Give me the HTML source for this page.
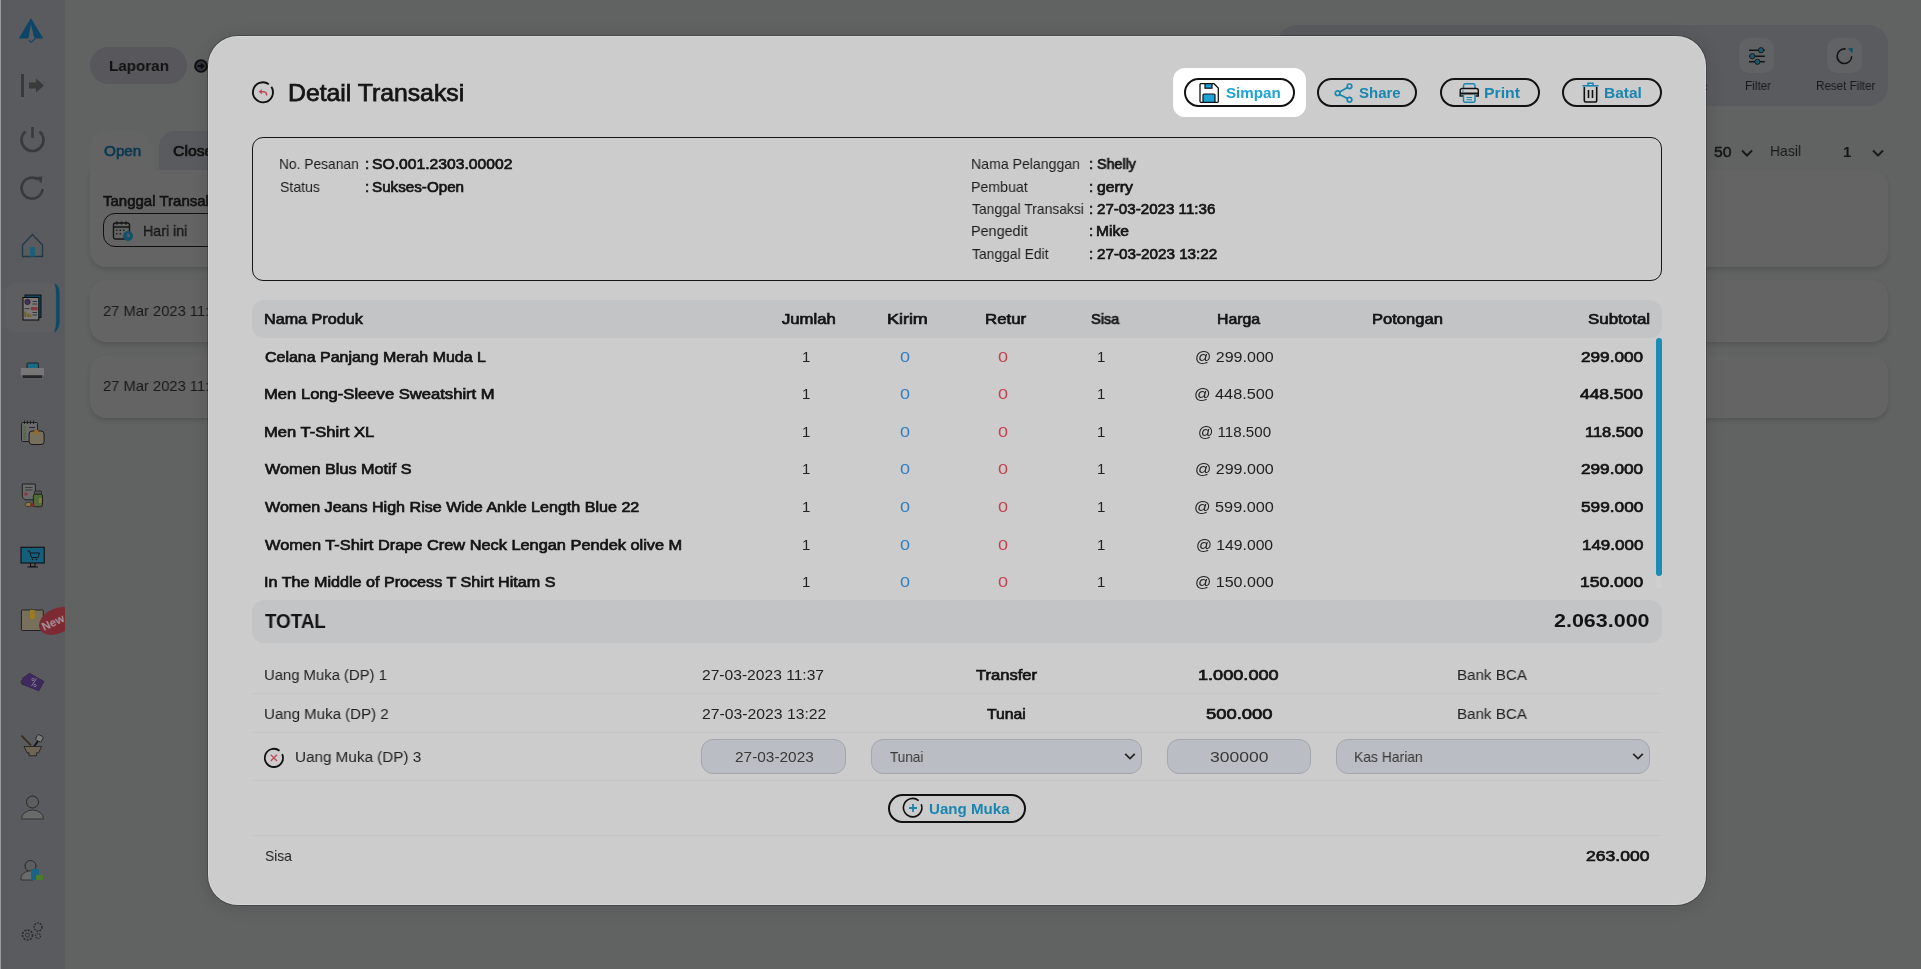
<!DOCTYPE html>
<html><head><meta charset="utf-8">
<title>Detail Transaksi</title>
<style>
*{box-sizing:border-box;margin:0;padding:0}
html,body{width:1921px;height:969px;overflow:hidden}
body{background:#616262;font-family:"Liberation Sans",sans-serif;color:#141414;position:relative}
.a{position:absolute}
.t{position:absolute;white-space:nowrap;line-height:1;transform-origin:0 0;will-change:transform}
svg{position:absolute;overflow:visible}
.sep{position:absolute;left:252px;width:1410px;height:1px;background:#c3c5c7}
.btn{position:absolute;top:78px;height:29px;border:2px solid #121212;border-radius:15px}
.inp{position:absolute;top:739px;height:35px;background:#babdc3;border:1px solid #a3a6ab;border-radius:12px}
</style></head>
<body>
<!-- sidebar -->
<div class="a" style="left:0;top:0;width:65px;height:969px;background:#5a5b5f"></div>
<div class="a" style="left:0;top:0;width:1px;height:969px;background:#9a9b9d"></div>

<!-- background page -->
<div class="a" style="left:90px;top:47px;width:97px;height:37px;border-radius:19px;background:#58585c"></div>
<svg style="left:194px;top:59px" width="14" height="14" viewBox="0 0 14 14"><circle cx="7" cy="7" r="5.9" fill="#30363b" stroke="#0e0e0e" stroke-width="1.9"/><path d="M3.5 7H9.3M6.9 4.6L9.4 7L6.9 9.4" stroke="#0e0e0e" stroke-width="1.9" fill="none"/></svg>

<div class="a" style="left:1277px;top:25px;width:611px;height:80.5px;border-radius:20px;background:#5a5b5e"></div>
<div class="a" style="left:1739px;top:38px;width:35px;height:35px;border-radius:10px;background:#616264"></div>
<div class="a" style="left:1827px;top:38px;width:35px;height:35px;border-radius:10px;background:#616264"></div>
<svg style="left:1745px;top:45px" width="24" height="24" viewBox="0 0 24 24"><g stroke="#141414" stroke-width="1.5" fill="none"><path d="M4 5.2H19.8M4 11.2H19.8M4 16.8H19.8"/></g><g stroke="#141414" stroke-width="0.9" fill="#1b5a72"><circle cx="16" cy="5.2" r="2.6"/><circle cx="7.3" cy="11.2" r="2.6"/><circle cx="12.4" cy="16.8" r="2.6"/></g></svg>
<svg style="left:1833px;top:45px" width="24" height="24" viewBox="0 0 24 24"><path d="M18.7 11.2A7.3 7.3 0 1 1 12.67 4.0" stroke="#141414" stroke-width="1.6" fill="none"/><path d="M14.8 3.6L19.9 3.1L19.5 8.2Z" fill="#134d62"/></svg>
<div class="a" style="left:1706px;top:85px;width:1.3px;height:1.3px;background:#141414"></div><div class="a" style="left:1706px;top:89px;width:1.3px;height:1.3px;background:#141414"></div>

<!-- tabs card -->
<div class="a" style="left:90px;top:131px;width:63px;height:45px;border-radius:16px 16px 0 0;background:#646464"></div>
<div class="a" style="left:159px;top:131px;width:200px;height:40px;border-radius:16px 16px 0 0;background:#5a5b5e"></div>
<div class="a" style="left:90px;top:170px;width:1798px;height:97px;border-radius:0 16px 16px 16px;background:#646464;box-shadow:0 3px 4px rgba(0,0,0,0.12)"></div>
<div class="a" style="left:103px;top:213px;width:200px;height:34px;border:1.5px solid #111;border-radius:12px"></div>
<svg style="left:112px;top:220px" width="22" height="22" viewBox="0 0 22 22"><rect x="1.5" y="3" width="16" height="16" rx="2" stroke="#151515" stroke-width="1.4" fill="none"/><path d="M1.5 7H17.5M5 1.5V4.5M9.5 1.5V4.5M14 1.5V4.5" stroke="#151515" stroke-width="1.4"/><g fill="#222"><rect x="4" y="9.5" width="1.5" height="1.5"/><rect x="7.5" y="9.5" width="1.5" height="1.5"/><rect x="11" y="9.5" width="1.5" height="1.5"/><rect x="4" y="13" width="1.5" height="1.5"/><rect x="7.5" y="13" width="1.5" height="1.5"/></g><circle cx="16" cy="16" r="5" fill="#14506a"/><path d="M16 13.3V16.2H18" stroke="#646464" stroke-width="1.2" fill="none"/></svg>
<div class="a" style="left:90px;top:280px;width:1798px;height:62px;border-radius:16px;background:#646464;box-shadow:0 3px 4px rgba(0,0,0,0.12)"></div>
<div class="a" style="left:90px;top:355px;width:1798px;height:63px;border-radius:16px;background:#646464;box-shadow:0 3px 4px rgba(0,0,0,0.12)"></div>
<svg style="left:1740px;top:148px" width="14" height="10" viewBox="0 0 14 10"><path d="M2 2.5L7 7.5L12 2.5" stroke="#1a1a1a" stroke-width="2" fill="none"/></svg>
<svg style="left:1871px;top:148px" width="14" height="10" viewBox="0 0 14 10"><path d="M2 2.5L7 7.5L12 2.5" stroke="#1a1a1a" stroke-width="2" fill="none"/></svg>

<div class="t" style="left:108.92px;top:57.88px;font-size:15.5px;color:#121212;font-weight:700;transform:scaleX(0.9803)">Laporan</div>
<div class="t" style="left:103.60px;top:143.30px;font-size:15px;color:#0b3a52;-webkit-text-stroke:0.7px #0b3a52;transform:scaleX(1.0178)">Open</div>
<div class="t" style="left:172.70px;top:143.30px;font-size:15px;color:#121212;-webkit-text-stroke:0.7px #121212;transform:scaleX(1.0524)">Close</div>
<div class="t" style="left:103.10px;top:193.10px;font-size:15px;color:#121212;-webkit-text-stroke:0.6px #121212">Tanggal Transaksi</div>
<div class="t" style="left:143.05px;top:222.80px;font-size:15px;color:#161616;-webkit-text-stroke:0.3px #161616;transform:scaleX(0.9483)">Hari ini</div>
<div class="t" style="left:102.90px;top:303.38px;font-size:15.5px;color:#1a1a1a;transform:scaleX(0.9505)">27 Mar 2023 11:36</div>
<div class="t" style="left:102.90px;top:378.38px;font-size:15.5px;color:#1a1a1a;transform:scaleX(0.9505)">27 Mar 2023 11:37</div>
<div class="t" style="left:1713.70px;top:143.90px;font-size:15px;color:#161616;-webkit-text-stroke:0.5px #161616;transform:scaleX(1.0525)">50</div>
<div class="t" style="left:1770.37px;top:143.30px;font-size:15px;color:#1a1a1a;transform:scaleX(0.9279)">Hasil</div>
<div class="t" style="left:1843.10px;top:143.90px;font-size:15px;color:#161616;font-weight:700">1</div>
<div class="t" style="left:1744.85px;top:80.44px;font-size:12px;color:#1a1a1a;transform:scaleX(0.9749)">Filter</div>
<div class="t" style="left:1815.80px;top:80.44px;font-size:12px;color:#1a1a1a;transform:scaleX(0.9682)">Reset Filter</div>

<!-- sidebar icons -->
<svg style="left:0;top:0;overflow:hidden" width="65" height="969" viewBox="0 0 65 969">
 <!-- logo -->
 <path d="M30.9 17.9L43.2 38.6H34.3L31 24.2L28.4 38.6H18.8Z" fill="#0c4566"/>
 <path d="M28.8 40.2L31 42.3L35.3 38.6" stroke="#0c4566" stroke-width="1.1" fill="none"/>
 <!-- enter -->
 <rect x="21" y="74" width="3" height="23" fill="#3a3a3a"/>
 <path d="M29 82.5H36V78.5L44 85.5L36 92.5V88.5H29Z" fill="#3a3a3a"/>
 <!-- power -->
 <path d="M25.5 131.5A11 11 0 1 0 39.5 131.5" stroke="#3a3a3a" stroke-width="2.6" fill="none"/>
 <path d="M32.5 127V138" stroke="#3a3a3a" stroke-width="2.6"/>
 <!-- refresh -->
 <path d="M42.5 189A10.5 10.5 0 1 1 38 179.5" stroke="#3a3a3a" stroke-width="2.6" fill="none"/>
 <path d="M35.5 177L42.5 176.5L41.5 183.5Z" fill="#3a3a3a"/>
 <!-- home -->
 <path d="M22.5 256.5V245L32.5 234.5L42.5 245V256.5Z" stroke="#223846" stroke-width="1.3" fill="none"/>
 <rect x="30" y="247" width="5" height="9.5" fill="#1d5f77"/>
 <!-- report (active) -->
 <path d="M16 283H55V332.5H16A10 10 0 0 1 6 322.5V293A10 10 0 0 1 16 283Z" fill="#5e5e60"/>
 <path d="M54 283Q59.6 285 59.6 294V321Q59.6 330 54 332.5Q56.2 328 56.2 321V294Q56.2 287 54 283Z" fill="#0d4a66"/>
 <rect x="25" y="295" width="16" height="22.5" fill="#0d4a66" stroke="#0a0a0a" stroke-width="0.9"/>
 <rect x="23" y="297.5" width="15.8" height="22.5" fill="#7a7a7a" stroke="#0a0a0a" stroke-width="1"/>
 <circle cx="27.5" cy="302" r="2.7" fill="#4a2b5c" stroke="#1a1a1a" stroke-width="0.6"/>
 <path d="M32.5 301.5H37M32.5 304H37M32.5 312.5H37M32.5 315H37M24.5 308.7H29.5" stroke="#333" stroke-width="1"/>
 <rect x="30.7" y="307" width="7" height="3.3" rx="1" fill="#8c3440"/>
 <path d="M24.3 317V311.5H26.3V317M27.2 317V313.5H29.2V317M29.8 317V314.8H31.3V317" fill="#6e5f28"/>
 <!-- shipping/printer -->
 <rect x="27" y="363" width="11.4" height="5.5" rx="1" fill="#1b6a86" stroke="#111" stroke-width="0.8"/>
 <rect x="20.8" y="368" width="23.2" height="7.3" fill="#777"/>
 <rect x="22.9" y="375.3" width="19.1" height="2.7" fill="#262626"/>
 <!-- clipboard -->
 <rect x="21.5" y="422.5" width="16" height="19" rx="1" fill="#6a6a6a" stroke="#1a1a1a" stroke-width="0.9"/>
 <path d="M24.5 420.5V424M27.5 420.5V424M30.5 420.5V424M33.5 420.5V424" stroke="#1a1a1a" stroke-width="0.9"/>
 <path d="M24.8 426V440" stroke="#4f6b3c" stroke-width="2.4" stroke-dasharray="2.2 1"/>
 <path d="M29 427.5H35" stroke="#2a2a2a" stroke-width="1"/>
 <rect x="29.1" y="431" width="15" height="13.5" rx="3" fill="#76705c" stroke="#1a1a1a" stroke-width="1"/>
 <rect x="34.3" y="430" width="4" height="4.2" rx="1" fill="#9c6a1a"/>
 <!-- document/medicine -->
 <path d="M22.3 484H35.4V499.8H25L22.3 497Z" fill="#6a6a6a" stroke="#1a1a1a" stroke-width="0.9"/>
 <path d="M25 487.5H32.5M25 490H32.5" stroke="#3a3a3a" stroke-width="1.1"/>
 <circle cx="26" cy="494" r="1.7" fill="#8c3440"/>
 <rect x="33.3" y="494" width="9.2" height="12.8" rx="2.2" fill="#4f6b3a" stroke="#1a1a1a" stroke-width="0.9"/>
 <rect x="34.3" y="491" width="7.2" height="3" rx="1" fill="#555" stroke="#1a1a1a" stroke-width="0.7"/>
 <rect x="39" y="498" width="2.5" height="5" fill="#8a7a3a"/>
 <ellipse cx="28.5" cy="504.5" rx="3.3" ry="2.2" fill="#8a7a3a" stroke="#1a1a1a" stroke-width="0.6"/>
 <ellipse cx="32.5" cy="505" rx="2.3" ry="1.9" fill="#7a2a30"/>
 <!-- monitor -->
 <rect x="21" y="547.3" width="23.2" height="15.7" fill="#155f7c" stroke="#111" stroke-width="1.1"/>
 <path d="M30.5 563V566.5H35V563M27.5 567H38" stroke="#111" stroke-width="1.1" fill="none"/>
 <path d="M27.5 551H29.5L31.5 557.5H38L39.5 553H30.5" stroke="#111" stroke-width="0.9" fill="none"/>
 <circle cx="32.5" cy="559.5" r="0.8" fill="#111"/><circle cx="36.5" cy="559.5" r="0.8" fill="#111"/>
 <!-- box + new -->
 <rect x="21.4" y="610" width="21.9" height="20.5" rx="1" fill="#77705c" stroke="#222" stroke-width="1"/>
 <rect x="30" y="610" width="4.8" height="9" fill="#9c7a22"/>
 <ellipse cx="57" cy="621" rx="19" ry="12.5" transform="rotate(-25 57 621)" fill="#7e2a34"/>
 <text x="44" y="631" font-family="Liberation Sans" font-weight="700" font-size="11.5" fill="#a38f93" transform="rotate(-25 44 631)">New</text>
 <!-- tag -->
 <path d="M22.5 678.2L29.5 673.2L44 681.5L38.8 690.8L22.8 684.5Z" fill="#3f2a60" stroke="#2a1d40" stroke-width="0.6"/>
 <path d="M22 680Q19.5 683 23 685" stroke="#222" stroke-width="0.9" fill="none"/>
 <path d="M36.5 678.5L31.5 686" stroke="#8a8294" stroke-width="0.9"/>
 <circle cx="33" cy="679.5" r="1.2" stroke="#8a8294" stroke-width="0.8" fill="none"/>
 <circle cx="35" cy="685.5" r="1.2" stroke="#8a8294" stroke-width="0.8" fill="none"/>
 <!-- mortar -->
 <path d="M21.5 735.6L31 745.4" stroke="#3a2e22" stroke-width="2"/>
 <path d="M34.2 746.2L38.5 740.5" stroke="#111" stroke-width="1.8"/>
 <rect x="36.3" y="735.3" width="6.2" height="6" rx="1" fill="#7c7c7c" stroke="#222" stroke-width="0.8" transform="rotate(25 39.4 738.3)"/>
 <path d="M24 746.5H41.6L38.6 752.8H36.6V755.8H29V752.8H27Z" fill="#6e6454" stroke="#222" stroke-width="0.9"/>
 <!-- user -->
 <circle cx="32.5" cy="802" r="6" stroke="#222" stroke-width="0.9" fill="#5e5e60"/>
 <path d="M21.5 819A11 9 0 0 1 43.5 819Z" fill="#6a6a6a" stroke="#222" stroke-width="0.7"/>
 <!-- user blue -->
 <circle cx="30.5" cy="866" r="5.5" stroke="#222" stroke-width="0.9" fill="#5e5e60"/>
 <path d="M21 880A10 8 0 0 1 33 871V880Z" fill="#6a6a6a" stroke="#222" stroke-width="0.7"/>
 <rect x="31" y="869" width="8" height="11" fill="#1a6286"/>
 <rect x="36" y="875" width="7" height="5" rx="1" fill="#4f7a2a"/>
 <!-- gears -->
 <circle cx="27.5" cy="935" r="5" stroke="#2a2a2a" stroke-width="1.6" fill="none" stroke-dasharray="2 1.3"/>
 <circle cx="27.5" cy="935" r="2" stroke="#2a2a2a" stroke-width="0.8" fill="none"/>
 <circle cx="38" cy="927" r="4" stroke="#2a2a2a" stroke-width="1.4" fill="none" stroke-dasharray="1.8 1.1"/>
 <circle cx="38" cy="936" r="2.5" stroke="#2a2a2a" stroke-width="1.2" fill="none" stroke-dasharray="1.5 1"/>
</svg>

<!-- modal -->
<div class="a" style="left:208px;top:36px;width:1498px;height:869px;border-radius:30px;background:#cccccc;box-shadow:0 0 0 1px rgba(20,20,20,0.28),inset 0 0 0 1px rgba(255,255,255,0.2),0 2px 16px 2px rgba(0,0,20,0.10)"></div>
<!-- spotlight -->
<div class="a" style="left:1173px;top:68px;width:133px;height:48.5px;border-radius:12px;background:#ffffff"></div>

<!-- back icon -->
<svg style="left:250px;top:80px" width="26" height="26" viewBox="0 0 26 26">
 <path d="M21.34 6.85A10 10 0 1 1 18.83 4.21" stroke="#111" stroke-width="1.9" fill="none"/>
 <path d="M9.6 11.7H13.8Q16.6 11.9 16.7 15.6" stroke="#c24a56" stroke-width="1.6" fill="none"/>
 <path d="M8.6 11.7L11.9 9.1V14.3Z" fill="#c24a56"/>
</svg>

<!-- buttons -->
<div class="btn" style="left:1184px;width:111px"></div>
<div class="btn" style="left:1317px;width:100px"></div>
<div class="btn" style="left:1440px;width:100px"></div>
<div class="btn" style="left:1562px;width:100px"></div>
<!-- floppy icon -->
<svg style="left:1199px;top:83px" width="20" height="20" viewBox="0 0 20 20">
 <path d="M1 1.5A1 1 0 0 1 2 0.7H15L19.3 5V18.3A1 1 0 0 1 18.3 19.3H2A1 1 0 0 1 1 18.3Z" fill="#fff" stroke="#111" stroke-width="1.3"/>
 <rect x="6" y="0.7" width="7" height="4.5" fill="#1ea3d6" stroke="#111" stroke-width="1.2"/>
 <path d="M4 19.3V12A1 1 0 0 1 5 11H15A1 1 0 0 1 16 12V19.3Z" fill="#1ea3d6" stroke="#111" stroke-width="1.2"/>
</svg>
<!-- share icon -->
<svg style="left:1334px;top:83px" width="20" height="20" viewBox="0 0 20 20">
 <g stroke="#1a86b0" stroke-width="1.7" fill="none">
 <circle cx="15.5" cy="3.3" r="2.3"/><circle cx="3.6" cy="10.2" r="2.3"/><circle cx="15.5" cy="16.7" r="2.3"/>
 <path d="M5.6 9L13.5 4.5M5.6 11.4L13.5 15.5"/></g>
</svg>
<!-- print icon -->
<svg style="left:1459px;top:83px" width="21" height="20" viewBox="0 0 21 20">
 <path d="M4.5 5.5V2.5A2 2 0 0 1 6.5 0.8H14A2 2 0 0 1 16 2.5V5.5" stroke="#1a86b0" stroke-width="1.5" fill="none"/>
 <path d="M4 13H1.2V7.5A2 2 0 0 1 3.2 5.5H17.3A2 2 0 0 1 19.3 7.5V13H16.5" stroke="#111" stroke-width="1.4" fill="none"/>
 <rect x="1.2" y="9.5" width="18" height="2" fill="#111"/>
 <circle cx="4" cy="8" r="0.8" fill="#1a86b0"/>
 <path d="M4.5 11.5V17.5A1.5 1.5 0 0 0 6 19.2H14.5A1.5 1.5 0 0 0 16 17.5V11.5" stroke="#1a86b0" stroke-width="1.5" fill="none"/>
 <path d="M7.5 14.5H13M7.5 16.8H13" stroke="#1a86b0" stroke-width="1.1"/>
</svg>
<!-- trash icon -->
<svg style="left:1582px;top:82px" width="17" height="21" viewBox="0 0 17 21">
 <path d="M0.5 3.8H16.5" stroke="#1a86b0" stroke-width="1.6"/>
 <path d="M6 3.5V1.3H11V3.5" stroke="#1a86b0" stroke-width="1.5" fill="none"/>
 <path d="M2.3 5V18.5A1.5 1.5 0 0 0 3.8 20H13.2A1.5 1.5 0 0 0 14.7 18.5V5" stroke="#111" stroke-width="1.6" fill="none"/>
 <path d="M6.5 8V16M10.5 8V16" stroke="#111" stroke-width="1.6"/>
</svg>

<!-- info box -->
<div class="a" style="left:252px;top:137px;width:1410px;height:144px;border:1.4px solid #161616;border-radius:11px"></div>

<!-- table header -->
<div class="a" style="left:252px;top:300px;width:1410px;height:38px;border-radius:12px;background:#c3c4c6"></div>
<!-- scrollbar -->
<div class="a" style="left:1656px;top:338px;width:6px;height:250px;background:#cfcfcf"></div>
<div class="a" style="left:1656px;top:338px;width:6px;height:238px;border-radius:3px;background:#1a8cb5"></div>

<!-- total -->
<div class="a" style="left:252px;top:600px;width:1410px;height:43px;border-radius:12px;background:#c3c4c6"></div>

<!-- separators -->
<div class="sep" style="top:693px"></div>
<div class="sep" style="top:732px"></div>
<div class="sep" style="top:780px"></div>
<div class="sep" style="top:835px"></div>

<!-- x icon -->
<svg style="left:263px;top:747px" width="22" height="22" viewBox="0 0 22 22">
 <path d="M19.15 7.05A9.1 9.1 0 1 1 16.5 3.73" stroke="#111" stroke-width="1.8" fill="none"/>
 <path d="M7.8 7.8L14 14M14 7.8L7.8 14" stroke="#c24a56" stroke-width="1.3"/>
</svg>

<!-- inputs -->
<div class="inp" style="left:701px;width:145px"></div>
<div class="inp" style="left:871px;width:271px"></div>
<div class="inp" style="left:1167px;width:144px"></div>
<div class="inp" style="left:1336px;width:314px"></div>
<svg style="left:1124px;top:752px" width="12" height="9" viewBox="0 0 12 9"><path d="M1.2 1.8L6 6.6L10.8 1.8" stroke="#262626" stroke-width="1.8" fill="none"/></svg>
<svg style="left:1632px;top:752px" width="12" height="9" viewBox="0 0 12 9"><path d="M1.2 1.8L6 6.6L10.8 1.8" stroke="#262626" stroke-width="1.8" fill="none"/></svg>

<!-- uang muka button -->
<div class="a" style="left:888px;top:794px;width:138px;height:29px;border:2px solid #111;border-radius:15px"></div>
<svg style="left:902px;top:797px" width="22" height="22" viewBox="0 0 22 22">
 <path d="M19.2 7.2A9.2 9.2 0 1 1 16.6 3.6" stroke="#111" stroke-width="1.6" fill="none"/>
 <path d="M11 7V15M7 11H15" stroke="#1a86b0" stroke-width="1.8"/>
</svg>

<div class="t" style="left:288.27px;top:81.08px;font-size:24px;color:#141414;-webkit-text-stroke:0.75px #141414;transform:scaleX(1.0318)">Detail Transaksi</div>
<div class="t" style="left:1225.60px;top:84.90px;font-size:15px;color:#1ea3d6;font-weight:700;transform:scaleX(1.0108)">Simpan</div>
<div class="t" style="left:1359.00px;top:84.90px;font-size:15px;color:#1a86b0;font-weight:700">Share</div>
<div class="t" style="left:1484.34px;top:84.90px;font-size:15px;color:#1a86b0;font-weight:700;transform:scaleX(1.0551)">Print</div>
<div class="t" style="left:1603.87px;top:84.90px;font-size:15px;color:#1a86b0;font-weight:700;transform:scaleX(1.0334)">Batal</div>
<div class="t" style="left:278.88px;top:156.10px;font-size:15px;color:#1c1c1c;transform:scaleX(0.9194)">No. Pesanan</div>
<div class="t" style="left:279.80px;top:179.20px;font-size:15px;color:#1c1c1c;transform:scaleX(0.9376)">Status</div>
<div class="t" style="left:364.60px;top:156.10px;font-size:15px;color:#141414;-webkit-text-stroke:0.7px #141414">:</div>
<div class="t" style="left:364.60px;top:179.20px;font-size:15px;color:#141414;-webkit-text-stroke:0.7px #141414">:</div>
<div class="t" style="left:372.20px;top:156.10px;font-size:15px;color:#141414;-webkit-text-stroke:0.7px #141414;transform:scaleX(1.0452)">SO.001.2303.00002</div>
<div class="t" style="left:372.20px;top:179.20px;font-size:15px;color:#141414;-webkit-text-stroke:0.7px #141414;transform:scaleX(1.0128)">Sukses-Open</div>
<div class="t" style="left:970.56px;top:155.90px;font-size:15px;color:#1c1c1c;transform:scaleX(0.9400)">Nama Pelanggan</div>
<div class="t" style="left:1089.00px;top:155.90px;font-size:15px;color:#141414;-webkit-text-stroke:0.7px #141414">:</div>
<div class="t" style="left:1097.00px;top:155.90px;font-size:15px;color:#141414;-webkit-text-stroke:0.7px #141414;transform:scaleX(0.9527)">Shelly</div>
<div class="t" style="left:970.55px;top:179.00px;font-size:15px;color:#1c1c1c;transform:scaleX(0.9454)">Pembuat</div>
<div class="t" style="left:1089.00px;top:179.00px;font-size:15px;color:#141414;-webkit-text-stroke:0.7px #141414">:</div>
<div class="t" style="left:1097.00px;top:179.00px;font-size:15px;color:#141414;-webkit-text-stroke:0.7px #141414;transform:scaleX(1.0526)">gerry</div>
<div class="t" style="left:971.50px;top:200.50px;font-size:15px;color:#1c1c1c;transform:scaleX(0.9260)">Tanggal Transaksi</div>
<div class="t" style="left:1089.00px;top:200.50px;font-size:15px;color:#141414;-webkit-text-stroke:0.7px #141414">:</div>
<div class="t" style="left:1097.00px;top:200.50px;font-size:15px;color:#141414;-webkit-text-stroke:0.7px #141414;transform:scaleX(1.0087)">27-03-2023 11:36</div>
<div class="t" style="left:970.54px;top:223.30px;font-size:15px;color:#1c1c1c;transform:scaleX(0.9585)">Pengedit</div>
<div class="t" style="left:1089.00px;top:223.30px;font-size:15px;color:#141414;-webkit-text-stroke:0.7px #141414">:</div>
<div class="t" style="left:1095.96px;top:223.30px;font-size:15px;color:#141414;-webkit-text-stroke:0.7px #141414;transform:scaleX(1.0420)">Mike</div>
<div class="t" style="left:971.50px;top:245.80px;font-size:15px;color:#1c1c1c;transform:scaleX(0.9270)">Tanggal Edit</div>
<div class="t" style="left:1089.00px;top:245.80px;font-size:15px;color:#141414;-webkit-text-stroke:0.7px #141414">:</div>
<div class="t" style="left:1097.00px;top:245.80px;font-size:15px;color:#141414;-webkit-text-stroke:0.7px #141414;transform:scaleX(1.0153)">27-03-2023 13:22</div>
<div class="t" style="left:264.02px;top:311.30px;font-size:15px;color:#141414;-webkit-text-stroke:0.7px #141414;transform:scaleX(1.0767)">Nama Produk</div>
<div class="t" style="left:782.20px;top:311.30px;font-size:15px;color:#141414;-webkit-text-stroke:0.7px #141414;transform:scaleX(1.1122)">Jumlah</div>
<div class="t" style="left:886.81px;top:311.30px;font-size:15px;color:#141414;-webkit-text-stroke:0.7px #141414;transform:scaleX(1.1939)">Kirim</div>
<div class="t" style="left:985.28px;top:311.30px;font-size:15px;color:#141414;-webkit-text-stroke:0.7px #141414;transform:scaleX(1.1209)">Retur</div>
<div class="t" style="left:1090.50px;top:311.30px;font-size:15px;color:#141414;-webkit-text-stroke:0.7px #141414;transform:scaleX(0.9719)">Sisa</div>
<div class="t" style="left:1216.74px;top:311.30px;font-size:15px;color:#141414;-webkit-text-stroke:0.7px #141414;transform:scaleX(1.0565)">Harga</div>
<div class="t" style="left:1372.20px;top:311.30px;font-size:15px;color:#141414;-webkit-text-stroke:0.7px #141414;transform:scaleX(1.1036)">Potongan</div>
<div class="t" style="left:1587.70px;top:311.30px;font-size:15px;color:#141414;-webkit-text-stroke:0.7px #141414;transform:scaleX(1.1278)">Subtotal</div>
<div class="t" style="left:264.70px;top:348.90px;font-size:15px;color:#141414;-webkit-text-stroke:0.7px #141414;transform:scaleX(1.0637)">Celana Panjang Merah Muda L</div>
<div class="t" style="left:802.00px;top:348.90px;font-size:15px;color:#222">1</div>
<div class="t" style="left:900.00px;top:348.90px;font-size:15px;color:#2e7ec2;transform:scaleX(1.2000)">0</div>
<div class="t" style="left:998.20px;top:348.90px;font-size:15px;color:#c8404c;transform:scaleX(1.2000)">0</div>
<div class="t" style="left:1096.50px;top:348.90px;font-size:15px;color:#222">1</div>
<div class="t" style="left:1194.98px;top:348.90px;font-size:15px;color:#222;transform:scaleX(1.0695)">@ 299.000</div>
<div class="t" style="left:1580.90px;top:348.90px;font-size:15px;color:#141414;-webkit-text-stroke:0.7px #141414;transform:scaleX(1.1452)">299.000</div>
<div class="t" style="left:263.59px;top:386.30px;font-size:15px;color:#141414;-webkit-text-stroke:0.7px #141414;transform:scaleX(1.1066)">Men Long-Sleeve Sweatshirt M</div>
<div class="t" style="left:802.00px;top:386.30px;font-size:15px;color:#222">1</div>
<div class="t" style="left:900.00px;top:386.30px;font-size:15px;color:#2e7ec2;transform:scaleX(1.2000)">0</div>
<div class="t" style="left:998.20px;top:386.30px;font-size:15px;color:#c8404c;transform:scaleX(1.2000)">0</div>
<div class="t" style="left:1096.50px;top:386.30px;font-size:15px;color:#222">1</div>
<div class="t" style="left:1194.42px;top:386.30px;font-size:15px;color:#222;transform:scaleX(1.0848)">@ 448.500</div>
<div class="t" style="left:1580.10px;top:386.30px;font-size:15px;color:#141414;-webkit-text-stroke:0.7px #141414;transform:scaleX(1.1600)">448.500</div>
<div class="t" style="left:263.60px;top:424.40px;font-size:15px;color:#141414;-webkit-text-stroke:0.7px #141414;transform:scaleX(1.1044)">Men T-Shirt XL</div>
<div class="t" style="left:802.00px;top:424.40px;font-size:15px;color:#222">1</div>
<div class="t" style="left:900.00px;top:424.40px;font-size:15px;color:#2e7ec2;transform:scaleX(1.2000)">0</div>
<div class="t" style="left:998.20px;top:424.40px;font-size:15px;color:#c8404c;transform:scaleX(1.2000)">0</div>
<div class="t" style="left:1096.50px;top:424.40px;font-size:15px;color:#222">1</div>
<div class="t" style="left:1197.84px;top:424.40px;font-size:15px;color:#222;transform:scaleX(1.0076)">@ 118.500</div>
<div class="t" style="left:1584.91px;top:424.40px;font-size:15px;color:#141414;-webkit-text-stroke:0.7px #141414;transform:scaleX(1.0934)">118.500</div>
<div class="t" style="left:264.70px;top:461.30px;font-size:15px;color:#141414;-webkit-text-stroke:0.7px #141414;transform:scaleX(1.0804)">Women Blus Motif S</div>
<div class="t" style="left:802.00px;top:461.30px;font-size:15px;color:#222">1</div>
<div class="t" style="left:900.00px;top:461.30px;font-size:15px;color:#2e7ec2;transform:scaleX(1.2000)">0</div>
<div class="t" style="left:998.20px;top:461.30px;font-size:15px;color:#c8404c;transform:scaleX(1.2000)">0</div>
<div class="t" style="left:1096.50px;top:461.30px;font-size:15px;color:#222">1</div>
<div class="t" style="left:1194.98px;top:461.30px;font-size:15px;color:#222;transform:scaleX(1.0695)">@ 299.000</div>
<div class="t" style="left:1580.90px;top:461.30px;font-size:15px;color:#141414;-webkit-text-stroke:0.7px #141414;transform:scaleX(1.1452)">299.000</div>
<div class="t" style="left:264.70px;top:499.40px;font-size:15px;color:#141414;-webkit-text-stroke:0.7px #141414;transform:scaleX(1.0722)">Women Jeans High Rise Wide Ankle Length Blue 22</div>
<div class="t" style="left:802.00px;top:499.40px;font-size:15px;color:#222">1</div>
<div class="t" style="left:900.00px;top:499.40px;font-size:15px;color:#2e7ec2;transform:scaleX(1.2000)">0</div>
<div class="t" style="left:998.20px;top:499.40px;font-size:15px;color:#c8404c;transform:scaleX(1.2000)">0</div>
<div class="t" style="left:1096.50px;top:499.40px;font-size:15px;color:#222">1</div>
<div class="t" style="left:1194.42px;top:499.40px;font-size:15px;color:#222;transform:scaleX(1.0848)">@ 599.000</div>
<div class="t" style="left:1580.60px;top:499.40px;font-size:15px;color:#141414;-webkit-text-stroke:0.7px #141414;transform:scaleX(1.1507)">599.000</div>
<div class="t" style="left:264.70px;top:536.60px;font-size:15px;color:#141414;-webkit-text-stroke:0.7px #141414;transform:scaleX(1.0895)">Women T-Shirt Drape Crew Neck Lengan Pendek olive M</div>
<div class="t" style="left:802.00px;top:536.60px;font-size:15px;color:#222">1</div>
<div class="t" style="left:900.00px;top:536.60px;font-size:15px;color:#2e7ec2;transform:scaleX(1.2000)">0</div>
<div class="t" style="left:998.20px;top:536.60px;font-size:15px;color:#c8404c;transform:scaleX(1.2000)">0</div>
<div class="t" style="left:1096.50px;top:536.60px;font-size:15px;color:#222">1</div>
<div class="t" style="left:1195.80px;top:536.60px;font-size:15px;color:#222;transform:scaleX(1.0474)">@ 149.000</div>
<div class="t" style="left:1581.67px;top:536.60px;font-size:15px;color:#141414;-webkit-text-stroke:0.7px #141414;transform:scaleX(1.1309)">149.000</div>
<div class="t" style="left:263.62px;top:574.20px;font-size:15px;color:#141414;-webkit-text-stroke:0.7px #141414;transform:scaleX(1.0759)">In The Middle of Process T Shirt Hitam S</div>
<div class="t" style="left:802.00px;top:574.20px;font-size:15px;color:#222">1</div>
<div class="t" style="left:900.00px;top:574.20px;font-size:15px;color:#2e7ec2;transform:scaleX(1.2000)">0</div>
<div class="t" style="left:998.20px;top:574.20px;font-size:15px;color:#c8404c;transform:scaleX(1.2000)">0</div>
<div class="t" style="left:1096.50px;top:574.20px;font-size:15px;color:#222">1</div>
<div class="t" style="left:1194.98px;top:574.20px;font-size:15px;color:#222;transform:scaleX(1.0695)">@ 150.000</div>
<div class="t" style="left:1579.73px;top:574.20px;font-size:15px;color:#141414;-webkit-text-stroke:0.7px #141414;transform:scaleX(1.1668)">150.000</div>
<div class="t" style="left:265.40px;top:611.07px;font-size:20px;color:#141414;font-weight:700;transform:scaleX(0.9383)">TOTAL</div>
<div class="t" style="left:1553.60px;top:612.08px;font-size:18.8px;color:#141414;font-weight:700;transform:scaleX(1.1431)">2.063.000</div>
<div class="t" style="left:264.14px;top:666.88px;font-size:15.5px;color:#222;transform:scaleX(0.9571)">Uang Muka (DP) 1</div>
<div class="t" style="left:701.60px;top:666.88px;font-size:15.5px;color:#222;transform:scaleX(1.0066)">27-03-2023 11:37</div>
<div class="t" style="left:975.80px;top:667.30px;font-size:15px;color:#141414;-webkit-text-stroke:0.7px #141414;transform:scaleX(1.1032)">Transfer</div>
<div class="t" style="left:1198.09px;top:667.30px;font-size:15px;color:#141414;-webkit-text-stroke:0.7px #141414;transform:scaleX(1.2082)">1.000.000</div>
<div class="t" style="left:1456.57px;top:666.88px;font-size:15.5px;color:#222;transform:scaleX(0.9766)">Bank BCA</div>
<div class="t" style="left:264.13px;top:705.88px;font-size:15.5px;color:#222;transform:scaleX(0.9706)">Uang Muka (DP) 2</div>
<div class="t" style="left:701.60px;top:705.88px;font-size:15.5px;color:#222;transform:scaleX(1.0159)">27-03-2023 13:22</div>
<div class="t" style="left:987.10px;top:706.30px;font-size:15px;color:#141414;-webkit-text-stroke:0.7px #141414;transform:scaleX(1.0482)">Tunai</div>
<div class="t" style="left:1205.70px;top:706.30px;font-size:15px;color:#141414;-webkit-text-stroke:0.7px #141414;transform:scaleX(1.2287)">500.000</div>
<div class="t" style="left:1456.57px;top:705.88px;font-size:15.5px;color:#222;transform:scaleX(0.9766)">Bank BCA</div>
<div class="t" style="left:294.72px;top:748.88px;font-size:15.5px;color:#222;transform:scaleX(0.9832)">Uang Muka (DP) 3</div>
<div class="t" style="left:734.50px;top:749.30px;font-size:15px;color:#383838;transform:scaleX(1.0264)">27-03-2023</div>
<div class="t" style="left:890.00px;top:749.30px;font-size:15px;color:#383838;transform:scaleX(0.9008)">Tunai</div>
<div class="t" style="left:1209.60px;top:749.30px;font-size:15px;color:#383838;transform:scaleX(1.1667)">300000</div>
<div class="t" style="left:1354.07px;top:749.30px;font-size:15px;color:#383838;transform:scaleX(0.9264)">Kas Harian</div>
<div class="t" style="left:929.20px;top:801.10px;font-size:15px;color:#1a86b0;font-weight:700;transform:scaleX(1.0066)">Uang Muka</div>
<div class="t" style="left:264.70px;top:848.10px;font-size:15px;color:#222;transform:scaleX(0.9217)">Sisa</div>
<div class="t" style="left:1586.00px;top:848.30px;font-size:15px;color:#141414;-webkit-text-stroke:0.7px #141414;transform:scaleX(1.1693)">263.000</div>
</body></html>
